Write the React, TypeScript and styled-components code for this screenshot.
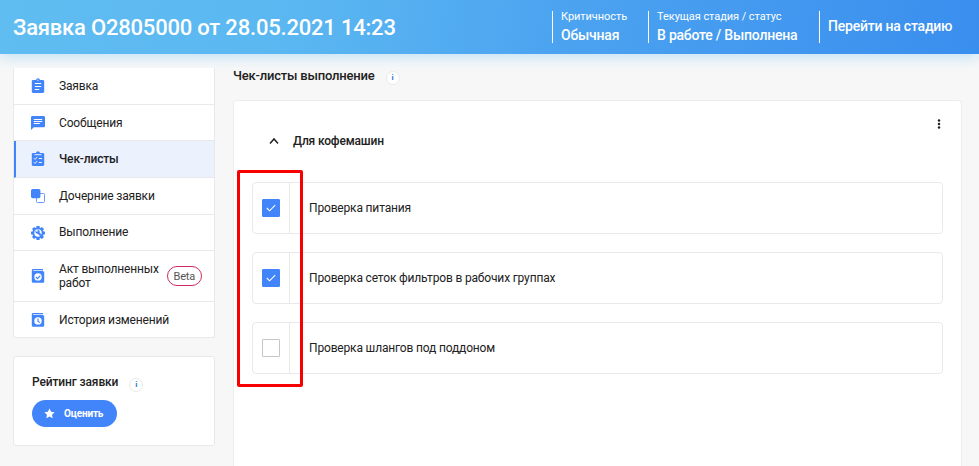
import React from 'react';
import styled, { createGlobalStyle, css } from 'styled-components';

const BLUE = '#4285fa';

const GlobalStyle = createGlobalStyle`
  *, *::before, *::after { box-sizing: border-box; }
  body {
    margin: 0;
    overflow: hidden;
    background: #f7f7f7;
    color: #212121;
    font-family: Roboto, "Liberation Sans", sans-serif;
    font-size: 12px;
    letter-spacing: -0.165px;
  }
  button { font: inherit; letter-spacing: inherit; border: 0; padding: 0; background: none; cursor: pointer; }
`;

const Page = styled.div`
  height: 466px;
  display: flex;
  flex-direction: column;
  overflow: hidden;
`;

const Header = styled.header`
  flex: none;
  height: 54px;
  display: flex;
  align-items: center;
  padding-left: 13px;
  color: #fff;
  background: linear-gradient(100deg, #60bdf1 0%, #5bb7f1 30%, #4ba3f0 58%, #3a8eee 100%);
  box-shadow: 0 2px 14px rgba(90, 185, 245, 0.4);
`;

const Title = styled.h1`
  flex: 1;
  margin: 2px 0 0;
  font-size: 22px;
  line-height: 26px;
  font-weight: 500;
  letter-spacing: -0.2px;
`;

const HeaderCell = styled.div<{ $width: number }>`
  width: ${(p) => p.$width}px;
  height: 32px;
  padding-left: 8px;
  border-left: 1px solid #fff;
  display: flex;
  flex-direction: column;
  justify-content: center;
  white-space: nowrap;
`;

const Caption = styled.span`
  font-size: 11px;
  line-height: 14px;
  margin-top: -2px;
  letter-spacing: -0.06px;
`;

const Value = styled.span<{ $lower?: boolean }>`
  font-size: 14px;
  line-height: 16px;
  font-weight: 500;
  letter-spacing: -0.22px;
  ${(p) => (p.$lower ? css`margin: 3px 0 -1px;` : css`margin-top: -2px;`)}
`;

const Body = styled.div`
  flex: 1;
  display: flex;
  min-height: 0;
`;

const Sidebar = styled.aside`
  width: 202px;
  margin: 14px 18px 0 13px;
  flex: none;
`;

const Menu = styled.nav`
  background: #fff;
  border: 1px solid #e9e9ec;
  border-top: 0;
  border-radius: 0 0 3px 3px;
`;

const MenuItem = styled.a<{ $height: number; $active?: boolean }>`
  height: ${(p) => p.$height}px;
  display: flex;
  align-items: center;
  padding-left: ${(p) => (p.$active ? 14 : 16)}px;
  border-bottom: 1px solid #e9e9ec;
  &:last-child { border-bottom: 0; }
  ${(p) => p.$active && css`
    background: #ecf1fe;
    border-left: 2px solid ${BLUE};
    font-weight: 500;
  `}
`;

const Icon = styled.svg`
  width: 16px;
  height: 16px;
  flex: none;
  fill: ${BLUE};
`;

const MenuLabel = styled.span<{ $raised?: boolean }>`
  margin-left: 13px;
  margin-bottom: ${(p) => (p.$raised ? 2 : 0)}px;
  line-height: 14px;
`;

const Beta = styled.span`
  margin-left: 8px;
  width: 35px;
  height: 20px;
  border: 1px solid #cf2c60;
  border-radius: 10px;
  color: #555;
  font-size: 11px;
  line-height: 19px;
  text-align: center;
`;

const Rating = styled.section`
  height: 90px;
  margin-top: 18px;
  padding: 18px 0 0 18px;
  background: #fff;
  border: 1px solid #e9e9ec;
  border-radius: 3px;
`;

const Heading = styled.h2`
  margin: 0;
  display: flex;
  align-items: center;
  font-size: 13px;
  line-height: 15px;
  font-weight: 500;
  letter-spacing: -0.2px;
`;

const RatingHeading = styled(Heading)`
  font-size: 12px;
  letter-spacing: -0.13px;
`;

const Info = styled.span<{ $gap: number }>`
  margin: 2px 0 -2px ${(p) => p.$gap}px;
  width: 14px;
  height: 14px;
  border: 1px solid #e9eaec;
  border-radius: 50%;
  background: #fff;
  color: #2576cf;
  font-size: 8px;
  line-height: 12px;
  font-weight: 700;
  letter-spacing: 0;
  text-align: center;
`;

const RateButton = styled.button`
  width: 85px;
  height: 27px;
  margin-top: 10px;
  display: flex;
  align-items: center;
  padding-left: 12px;
  gap: 9px;
  border-radius: 14px;
  background: ${BLUE};
  color: #fff;
  font-size: 10px;
  font-weight: 700;
`;

const Star = styled.svg`
  width: 11px;
  height: 11px;
  fill: #fff;
`;

const Main = styled.main`
  width: 729px;
  display: flex;
  flex-direction: column;
  padding-top: 14px;
`;

const Panel = styled.section`
  flex: 1;
  margin-top: 17px;
  background: #fff;
  border: 1px solid #ededef;
  border-bottom: 0;
  border-radius: 4px 4px 0 0;
  padding: 16px 18px 0;
`;

const PanelTools = styled.div`
  display: flex;
  justify-content: flex-end;
  height: 14px;
`;

const More = styled.svg`
  width: 8px;
  height: 14px;
  fill: #222;
`;

const GroupHeader = styled.div`
  display: flex;
  align-items: center;
  height: 20px;
  padding-left: 17px;
  font-weight: 500;
`;

const Chevron = styled.svg`
  width: 10px;
  height: 8px;
  margin-right: 14px;
  fill: none;
  stroke: #222;
  stroke-width: 1.5;
`;

const CheckList = styled.div`
  position: relative;
  margin-top: 31px;
  display: flex;
  flex-direction: column;
  gap: 18px;
`;

const CheckRow = styled.label`
  height: 52px;
  display: flex;
  align-items: center;
  border: 1px solid #e9e9eb;
  border-radius: 4px;
`;

const CheckCell = styled.span`
  width: 37px;
  height: 100%;
  display: flex;
  align-items: center;
  padding-left: 9px;
  border-right: 1px solid #e9e9eb;
  margin-right: 19px;
`;

const Box = styled.span<{ $checked: boolean }>`
  width: 18px;
  height: 18px;
  display: flex;
  align-items: center;
  justify-content: center;
  border: 1px solid ${(p) => (p.$checked ? BLUE : '#c6c6c6')};
  border-radius: 1px;
  background: ${(p) => (p.$checked ? BLUE : '#fff')};
`;

const Tick = styled.svg`
  width: 10px;
  height: 8px;
  fill: none;
  stroke: #fff;
  stroke-width: 1.1;
`;

const Highlight = styled.div`
  position: absolute;
  left: -15px;
  top: -12px;
  width: 66px;
  height: 217px;
  border: 3px solid #f80000;
  border-radius: 2px;
  pointer-events: none;
`;

const CLIP = 'M1.8 3.2C1.8 2.5 2.4 1.9 3.1 1.9H5.9A2.2 2.2 0 0 1 10.1 1.9H12.9C13.6 1.9 14.2 2.5 14.2 3.2V13.8C14.2 14.5 13.6 15 12.9 15H3.1C2.4 15 1.8 14.5 1.8 13.8Z';

const ClipboardIcon = () => (
  <Icon viewBox="0 0 16 16">
    <path d={CLIP} />
    <path fill="none" stroke="#fff" strokeWidth="1.1" d="M4.8 5.5H11.2M4.8 8.5H11.2M4.8 11.5H9.2" />
    <circle cx="8" cy="2.2" r=".6" fill="#fff" />
  </Icon>
);

const MessageIcon = () => (
  <Icon viewBox="0 0 16 16">
    <path d="M2.4 1H13.6C14.5 1 15 1.6 15 2.4V10.9C15 11.7 14.5 12.3 13.6 12.3H3.8L1 15V2.4C1 1.6 1.6 1 2.4 1Z" />
    <path fill="none" stroke="#fff" strokeWidth="1" d="M3.8 4.5H12.2M3.8 6.5H12.2M3.8 8.5H9.8" />
  </Icon>
);

const ChecklistIcon = () => (
  <Icon viewBox="0 0 16 16">
    <path d={CLIP} />
    <path fill="none" stroke="#ecf1fe" strokeWidth="1" d="M4.5 3.7H11.5M3.8 7.2L5 8.4L7.2 6M8.8 7.5H12M3.8 11.2L5 12.4L7.2 10M8.8 11.5H12" />
  </Icon>
);

const CopiesIcon = () => (
  <Icon viewBox="0 0 16 16">
    <path fill="#fff" stroke={BLUE} strokeWidth=".8" d="M6.5 5.5H13.5Q14.5 5.5 14.5 6.5V13.5Q14.5 14.5 13.5 14.5H7.5Q6.5 14.5 6.5 13.5Z" />
    <rect x="1" y="1" width="9.4" height="9.2" rx="1.6" />
  </Icon>
);

const GearIcon = () => (
  <Icon viewBox="0 0 16 16">
    {[0, 45, 90, 135].map((angle) => (
      <rect key={angle} x="6.4" y="1" width="3.2" height="14" rx=".5" transform={`rotate(${angle} 8 8)`} />
    ))}
    <circle cx="8" cy="8" r="5.7" />
    <circle cx="8" cy="8" r="3.7" fill="#fff" />
    <path d="M5.6 5.5L7 6.9L8 5.9L6.9 4.8C8.2 4.3 9.7 5 9.7 6.6L9.5 7.5L11.7 9.7L10.2 11.2L7.8 8.8C6.1 9.2 4.8 7.4 5.6 5.5Z" />
  </Icon>
);

const BookIcon = ({ mark }: { mark: string }) => (
  <Icon viewBox="0 0 16 16">
    <path d="M1.8 2.3Q1.8 1 3.1 1H13V3.4H14.2V13.7Q14.2 14.7 13.2 14.7H3Q1.8 14.7 1.8 13.5Z" />
    <path fill="none" stroke="#fff" strokeWidth=".7" d="M3.1 2.5H13" />
    <circle cx="8" cy="8.9" r="3.7" fill="#fff" />
    <path fill="none" stroke={BLUE} strokeWidth="1.2" d={mark} />
  </Icon>
);

const menu = [
  { label: 'Заявка', icon: <ClipboardIcon />, height: 37 },
  { label: 'Сообщения', icon: <MessageIcon />, height: 36 },
  { label: 'Чек-листы', icon: <ChecklistIcon />, height: 37, active: true },
  { label: 'Дочерние заявки', icon: <CopiesIcon />, height: 37 },
  { label: 'Выполнение', icon: <GearIcon />, height: 36, raised: true },
  { label: 'Акт выполненных работ', icon: <BookIcon mark="M5.9 9L7.5 10.6L10.3 7.6" />, height: 51, beta: true },
  { label: 'История изменений', icon: <BookIcon mark="M8 6.4V9.2L9.8 10.6" />, height: 35 },
];

const checks = [
  { label: 'Проверка питания', done: true },
  { label: 'Проверка сеток фильтров в рабочих группах', done: true },
  { label: 'Проверка шлангов под поддоном', done: false },
];

export default function App() {
  return (
    <Page>
      <GlobalStyle />
      <Header>
        <Title>Заявка О2805000 от 28.05.2021 14:23</Title>
        <HeaderCell $width={96}>
          <Caption>Критичность</Caption>
          <Value $lower>Обычная</Value>
        </HeaderCell>
        <HeaderCell $width={171}>
          <Caption>Текущая стадия / статус</Caption>
          <Value $lower>В работе / Выполнена</Value>
        </HeaderCell>
        <HeaderCell $width={160}>
          <Value>Перейти на стадию</Value>
        </HeaderCell>
      </Header>
      <Body>
        <Sidebar>
          <Menu>
            {menu.map((item) => (
              <MenuItem key={item.label} $height={item.height} $active={item.active}>
                {item.icon}
                <MenuLabel $raised={item.raised}>
                  {item.beta ? <>Акт выполненных<br />работ</> : item.label}
                </MenuLabel>
                {item.beta && <Beta>Beta</Beta>}
              </MenuItem>
            ))}
          </Menu>
          <Rating>
            <RatingHeading>Рейтинг заявки<Info $gap={11}>i</Info></RatingHeading>
            <RateButton>
              <Star viewBox="0 0 24 24"><path d="M12 1l3.4 7.2 7.8 1-5.7 5.5 1.4 7.9L12 18.8l-6.9 3.8 1.4-7.9L.8 9.2l7.8-1z" /></Star>
              Оценить
            </RateButton>
          </Rating>
        </Sidebar>
        <Main>
          <Heading>Чек-листы выполнение<Info $gap={11}>i</Info></Heading>
          <Panel>
            <PanelTools>
              <More viewBox="0 0 8 14">
                <circle cx="4" cy="3.4" r="1.25" /><circle cx="4" cy="7" r="1.25" /><circle cx="4" cy="10.6" r="1.25" />
              </More>
            </PanelTools>
            <GroupHeader>
              <Chevron viewBox="0 0 10 8"><path d="M1 6.5L5 2L9 6.5" /></Chevron>
              Для кофемашин
            </GroupHeader>
            <CheckList>
              {checks.map((item) => (
                <CheckRow key={item.label}>
                  <CheckCell>
                    <Box $checked={item.done}>
                      {item.done && <Tick viewBox="0 0 10 8"><path d="M.8 4L3.6 6.8L9.2 1.2" /></Tick>}
                    </Box>
                  </CheckCell>
                  {item.label}
                </CheckRow>
              ))}
              <Highlight />
            </CheckList>
          </Panel>
        </Main>
      </Body>
    </Page>
  );
}
